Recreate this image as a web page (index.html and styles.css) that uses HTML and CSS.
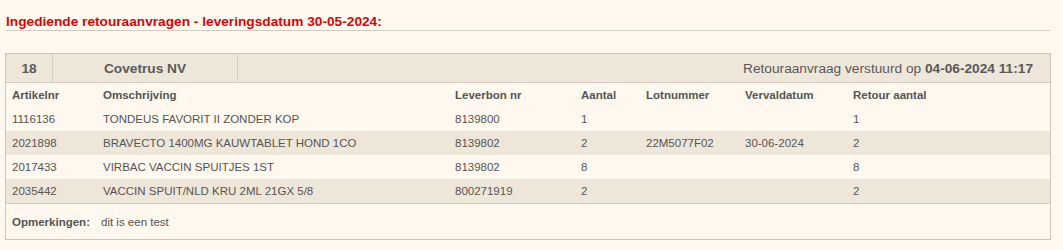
FILE: index.html
```html
<!DOCTYPE html>
<html lang="nl">
<head>
<meta charset="utf-8">
<title>Retouraanvragen</title>
<link rel="stylesheet" href="styles.css">
</head>
<body>
<div class="page">
  <h2 class="title">Ingediende retouraanvragen - leveringsdatum 30-05-2024:</h2>
  <div class="order">
    <div class="order-head">
      <div class="num">18</div>
      <div class="supplier">Covetrus NV</div>
      <div class="sent">Retouraanvraag verstuurd op <b>04-06-2024 11:17</b></div>
    </div>
    <table class="lines">
      <colgroup>
        <col class="c1"><col class="c2"><col class="c3"><col class="c4"><col class="c5"><col class="c6"><col class="c7">
      </colgroup>
      <thead>
        <tr><th>Artikelnr</th><th>Omschrijving</th><th>Leverbon nr</th><th>Aantal</th><th>Lotnummer</th><th>Vervaldatum</th><th>Retour aantal</th></tr>
      </thead>
      <tbody>
        <tr><td>1116136</td><td>TONDEUS FAVORIT II ZONDER KOP</td><td>8139800</td><td>1</td><td></td><td></td><td>1</td></tr>
        <tr class="alt"><td>2021898</td><td>BRAVECTO 1400MG KAUWTABLET HOND 1CO</td><td>8139802</td><td>2</td><td>22M5077F02</td><td>30-06-2024</td><td>2</td></tr>
        <tr><td>2017433</td><td>VIRBAC VACCIN SPUITJES 1ST</td><td>8139802</td><td>8</td><td></td><td></td><td>8</td></tr>
        <tr class="alt last"><td>2035442</td><td>VACCIN SPUIT/NLD KRU 2ML 21GX 5/8</td><td>800271919</td><td>2</td><td></td><td></td><td>2</td></tr>
      </tbody>
    </table>
    <div class="remarks"><span class="label">Opmerkingen:</span><span class="text">dit is een test</span></div>
  </div>
</div>
</body>
</html>
```
FILE: styles.css
```css
html, body {
  margin: 0;
  padding: 0;
  background: #fef8ef;
}
body {
  font-family: "Liberation Sans", Arial, Helvetica, sans-serif;
  color: #555;
}
.page {
  padding: 14px 12px 0 5px;
}
.title {
  margin: 0 1px 22px 1px;
  font-size: 13.7px;
  line-height: 16px;
  font-weight: bold;
  color: #cc0a0a;
  border-bottom: 1px solid #d2cbc2;
}
.order {
  border: 1px solid #cac5be;
}
.order-head {
  display: flex;
  height: 28px;
  align-items: stretch;
  background: #efe6da;
  border-bottom: 1px solid #d3cbc1;
  font-size: 13.7px;
  font-weight: bold;
  color: #595959;
}
.order-head > div {
  display: flex;
  align-items: center;
}
.num {
  width: 46px;
  justify-content: center;
  border-right: 1px solid #d8cfc4;
}
.supplier {
  width: 184px;
  justify-content: center;
  border-right: 1px solid #d8cfc4;
}
.sent {
  flex: 1;
  justify-content: flex-end;
  padding-right: 17px;
  font-weight: normal;
  white-space: pre;
}
.sent b {
  font-weight: bold;
}
.lines {
  width: 100%;
  border-collapse: collapse;
  table-layout: fixed;
  font-size: 11.5px;
  color: #555;
}
.c1 { width: 91px; }
.c2 { width: 352px; }
.c3 { width: 126px; }
.c4 { width: 65px; }
.c5 { width: 99px; }
.c6 { width: 108px; }
.lines th,
.lines td {
  height: 24px;
  padding: 0 6px;
  text-align: left;
  vertical-align: middle;
  white-space: nowrap;
  overflow: hidden;
}
.lines th {
  font-weight: bold;
}
.lines tr.alt {
  background: #efe6da;
}
.lines tr.last td {
  border-bottom: 1px solid #d3ccc3;
}
.remarks {
  display: flex;
  align-items: center;
  height: 35px;
  padding-left: 6px;
  font-size: 11.5px;
}
.remarks .label {
  width: 89px;
  font-weight: bold;
}
```
